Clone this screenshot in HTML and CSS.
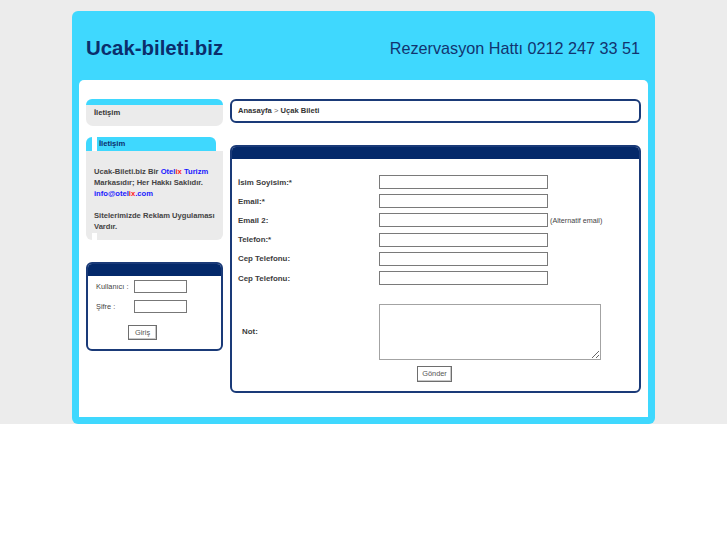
FILE: index.html
```html
<!DOCTYPE html>
<html lang="tr">
<head>
<meta charset="utf-8">
<title>Ucak-bileti.biz</title>
<link rel="stylesheet" href="styles.css">
</head>
<body>
<div class="page">
  <div class="frame">
    <header class="top">
      <h1 class="logo">Ucak-bileti.biz</h1>
      <div class="phone">Rezervasyon Hattı 0212 247 33 51</div>
    </header>
    <div class="inner">
      <aside class="side">
        <div class="box1">
          <div class="box1-top"></div>
          <div class="box1-body">İletişim</div>
        </div>

        <div class="box2">
          <div class="b2-head">
            <span class="b2-l"></span><span class="b2-gap"></span><span class="b2-title">İletişim</span><span class="b2-r"></span>
          </div>
          <div class="b2-body">
            <p>Ucak-Bileti.biz Bir <span class="blue">Otel</span><span class="red">ix</span> <span class="blue">Turizm</span> Markasıdır; Her Hakkı Saklıdır. <span class="blue">info@otel</span><span class="red">ix</span><span class="blue">.com</span></p>
            <p>Sitelerimizde Reklam Uygulaması Vardır.</p>
          </div>
          <div class="b2-foot">
            <span class="b2-fl"></span><span class="b2-gap"></span><span class="b2-fr"></span>
          </div>
        </div>

        <div class="login">
          <div class="login-head"></div>
          <div class="login-body">
            <div class="lrow"><span class="llabel">Kullanıcı :</span><input class="lin" type="text"></div>
            <div class="lrow"><span class="llabel">Şifre :</span><input class="lin" type="password"></div>
            <div class="lbtn-row"><button class="btn lbtn" type="button">Giriş</button></div>
          </div>
        </div>
      </aside>

      <main class="main">
        <div class="crumb"><b>Anasayfa</b> <span class="sep">&gt;</span> <b>Uçak Bileti</b></div>

        <div class="formbox">
          <div class="fb-head"></div>
          <form class="fb-body">
            <div class="frow"><label class="flabel">İsim Soyisim:*</label><input class="fin" type="text"></div>
            <div class="frow"><label class="flabel">Email:*</label><input class="fin" type="text"></div>
            <div class="frow"><label class="flabel">Email 2:</label><input class="fin" type="text"><span class="hint">(Alternatif email)</span></div>
            <div class="frow"><label class="flabel">Telefon:*</label><input class="fin" type="text"></div>
            <div class="frow"><label class="flabel">Cep Telefonu:</label><input class="fin" type="text"></div>
            <div class="frow"><label class="flabel">Cep Telefonu:</label><input class="fin" type="text"></div>
            <div class="frow trow"><label class="flabel notlabel">Not:</label><textarea class="fta"></textarea></div>
            <div class="sendrow"><button class="btn send" type="button">Gönder</button></div>
          </form>
        </div>
      </main>
    </div>
  </div>
</div>
</body>
</html>
```

FILE: styles.css
```css
* { box-sizing: border-box; }

html, body {
  margin: 0;
  padding: 0;
  background: #ffffff;
  font-family: "Liberation Sans", Arial, sans-serif;
}

.page {
  background: #ececec;
  padding-top: 11px;
}

.frame {
  width: 583px;
  margin: 0 auto;
  background: #3fd8fe;
  border-radius: 6px;
  padding: 0 7px 7px 7px;
}

.top {
  height: 69px;
  display: flex;
  align-items: center;
  justify-content: space-between;
  padding: 5px 8px 0 7px;
}

.logo {
  margin: 0;
  font-size: 20.4px;
  font-weight: bold;
  color: #0b2e6c;
}

.phone {
  font-size: 16.2px;
  color: #12346f;
}

.inner {
  background: #ffffff;
  border-radius: 5px 5px 0 0;
  padding: 19px 7px 24px 7px;
  display: flex;
  gap: 7px;
  align-items: flex-start;
}

/* ---------- left column ---------- */
.side {
  width: 137px;
  flex: none;
}

.box1-top {
  height: 6px;
  background: #3fd8fe;
  border-radius: 6px 6px 0 0;
}

.box1-body {
  height: 21px;
  background: #ebebeb;
  border-radius: 0 0 7px 7px;
  padding: 2px 8px 0;
  font-size: 7.6px;
  line-height: 11px;
  font-weight: bold;
  color: #333;
}

.box2 {
  margin-top: 11px;
}

.b2-head {
  display: flex;
  height: 14px;
}

.b2-l {
  width: 6px;
  background: #3fd8fe;
  border-radius: 6px 0 0 0;
}

.b2-gap {
  width: 5px;
  background: #ffffff;
}

.b2-title {
  width: 119px;
  background: #3fd8fe;
  border-radius: 0 6px 0 0;
  padding-left: 2px;
  font-size: 7.6px;
  line-height: 14px;
  font-weight: bold;
  color: #0b2e6c;
}

.b2-r {
  width: 7px;
}

.b2-body {
  background: #ebebeb;
  padding: 14.5px 6px 1.5px 8px;
  font-size: 7.6px;
  line-height: 11px;
  font-weight: bold;
  color: #444;
}

.b2-body p {
  margin: 0 0 11px 0;
}

.b2-body p:last-child {
  margin-bottom: 0;
}

.blue { color: #1a1aff; }
.red { color: #ff2020; }

.b2-foot {
  display: flex;
  height: 7px;
}

.b2-fl {
  width: 6px;
  background: #ebebeb;
  border-radius: 0 0 0 6px;
}

.b2-fr {
  flex: 1;
  background: #ebebeb;
  border-radius: 0 0 6px 0;
}

.login {
  margin-top: 22px;
  border: 2px solid #1a3a78;
  border-radius: 6px;
  overflow: hidden;
}

.login-head {
  height: 12px;
  background: #04296a;
}

.login-body {
  padding: 4px 0 9px 8px;
}

.lrow {
  display: flex;
  align-items: center;
  height: 13px;
  margin-bottom: 7px;
}

.llabel {
  width: 38px;
  font-size: 7.4px;
  color: #444;
}

.lin {
  width: 53px;
  height: 13px;
  margin: 0;
  padding: 0;
  border: 1px solid #777;
  background: #fff;
}

.lbtn-row {
  display: flex;
  padding-left: 32px;
  padding-top: 5px;
}

.btn {
  margin: 0;
  padding: 0;
  background: #fff;
  border: 1px solid #6e6e6e;
  box-shadow: inset -1px -1px 0 #c8c8c8;
  font-family: "Liberation Sans", Arial, sans-serif;
  font-size: 7.4px;
  color: #555;
  border-radius: 0;
}

.lbtn {
  width: 29px;
  height: 15px;
}

/* ---------- main column ---------- */
.main {
  width: 411px;
  flex: none;
}

.crumb {
  height: 24px;
  border: 2px solid #1a3a78;
  border-radius: 6px;
  padding: 0 6px;
  font-size: 7.6px;
  line-height: 20px;
  color: #333;
}

.crumb .sep {
  color: #666;
}

.formbox {
  margin-top: 22px;
  border: 2px solid #1a3a78;
  border-radius: 6px;
  overflow: hidden;
}

.fb-head {
  height: 12px;
  background: #04296a;
}

.fb-body {
  margin: 0;
  padding: 13.5px 8px 9px 6px;
}

.frow {
  display: flex;
  align-items: center;
  height: 19.2px;
}

.flabel {
  width: 141px;
  flex: none;
  font-size: 7.9px;
  font-weight: bold;
  color: #3c3c3c;
}

.fin {
  width: 169px;
  height: 14px;
  margin: 0;
  padding: 0;
  border: 1px solid #7a7a7a;
  background: #fff;
}

.hint {
  margin-left: 2px;
  font-size: 7.2px;
  color: #444;
}

.trow {
  height: 56px;
  margin-top: 16.3px;
}

.notlabel {
  padding-left: 4px;
}

.fta {
  width: 222px;
  height: 56px;
  margin: 0;
  padding: 0;
  border: 1px solid #a3a3a3;
  background: #fff;
}

.sendrow {
  display: flex;
  justify-content: center;
  margin-top: 6px;
}

.send {
  width: 35px;
  height: 16px;
}
```
